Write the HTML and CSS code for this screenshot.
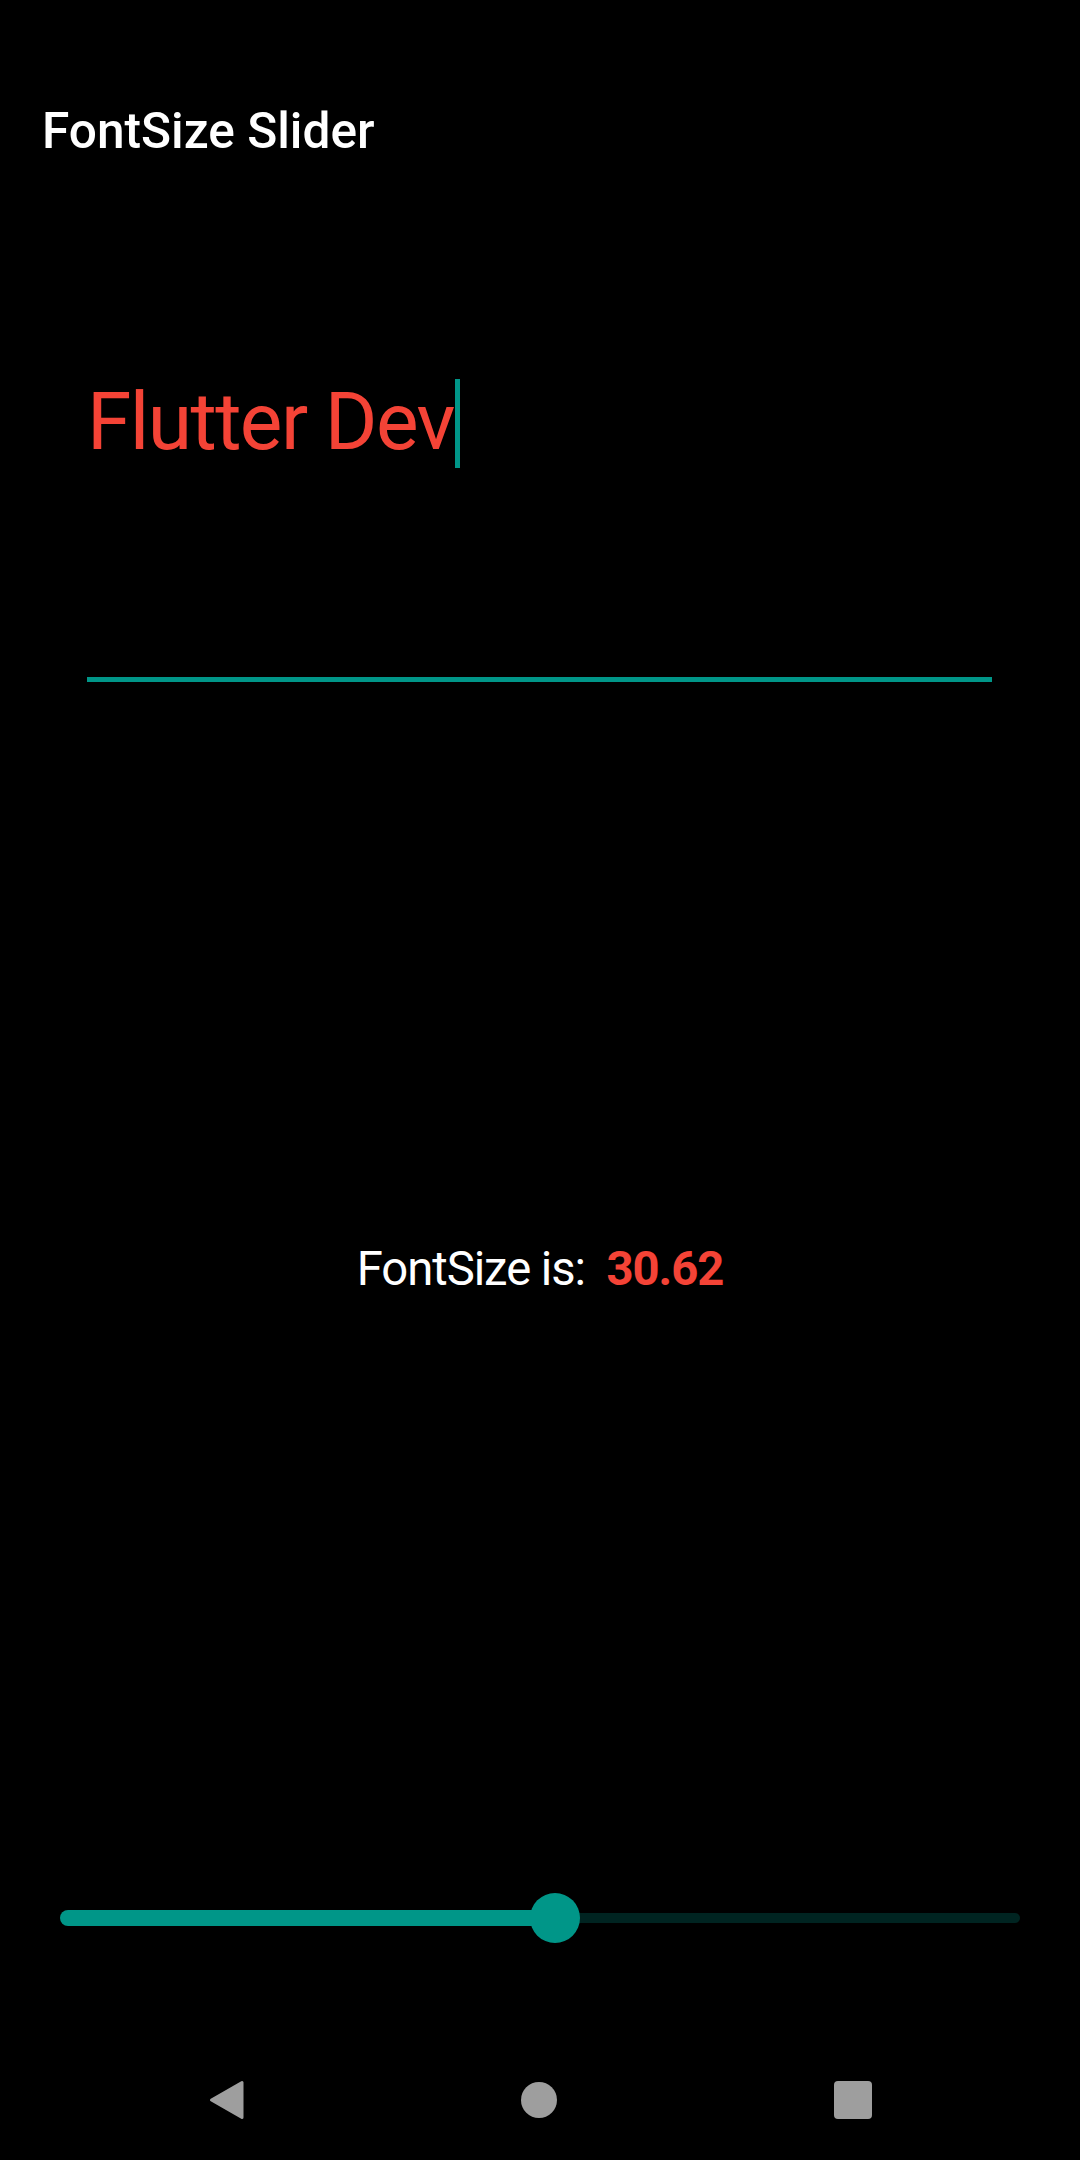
FILE: index.html
```html
<!DOCTYPE html>
<html lang="en">
<head>
<meta charset="utf-8">
<title>FontSize Slider</title>
<link rel="stylesheet" href="styles.css">
</head>
<body>
<div class="screen">
  <header class="appbar">
    <h1 class="appbar-title">FontSize Slider</h1>
  </header>
  <main class="content">
    <div class="field">
      <span class="field-text">Flutter Dev</span><span class="cursor"></span>
    </div>
    <p class="label">FontSize is:&nbsp; <strong class="value">30.62</strong></p>
    <div class="slider">
      <div class="track">
        <div class="track-active" style="width:495px"></div>
        <div class="track-inactive"></div>
        <div class="thumb" style="left:470px"></div>
      </div>
    </div>
  </main>
  <nav class="navbar">
    <span class="nav-btn nav-back">
      <svg width="35" height="40" viewBox="0 0 35 40"><path d="M2.5 20 L33 2.5 L33 37.5 Z" fill="#9e9e9e" stroke="#9e9e9e" stroke-width="3" stroke-linejoin="round"/></svg>
    </span>
    <span class="nav-btn nav-home"></span>
    <span class="nav-btn nav-recent"></span>
  </nav>
</div>
</body>
</html>
```
FILE: styles.css
```css
* { box-sizing: border-box; }
html, body {
  margin: 0;
  padding: 0;
  background: #000;
}
body {
  font-family: Roboto, "Noto Sans", "Liberation Sans", sans-serif;
  color: #fff;
}
.screen {
  width: 1080px;
  height: 2160px;
  display: flex;
  flex-direction: column;
  background: #000;
}
.appbar {
  height: 210px;
  padding: 102px 42px 0;
}
.appbar-title {
  margin: 0;
  font-size: 49.6px;
  line-height: 58px;
  font-weight: 500;
  color: #fff;
}
.content {
  flex: 1;
  display: flex;
  flex-direction: column;
}
.field {
  margin: 165px 88px 0 87px;
  padding-bottom: 208px;
  border-bottom: 5px solid #009688;
  font-size: 80.4px;
  line-height: 94px;
  letter-spacing: -0.02em;
  color: #f44336;
  white-space: nowrap;
}
.cursor {
  display: inline-block;
  width: 5px;
  height: 89px;
  margin-left: 1px;
  background: #009688;
  vertical-align: -19px;
}
.label {
  margin: 559px 0 0;
  text-align: center;
  font-size: 47.25px;
  line-height: 56px;
  letter-spacing: -0.022em;
  color: #fff;
}
.value {
  color: #f44336;
  font-weight: 700;
}
.slider {
  margin-top: 596px;
  padding: 0 60px;
}
.track {
  position: relative;
  height: 50px;
  display: flex;
  align-items: center;
}
.track-active {
  height: 16px;
  background: #009688;
  border-radius: 8px 0 0 8px;
}
.track-inactive {
  flex: 1;
  height: 10.5px;
  background: #002421;
  border-radius: 0 5.25px 5.25px 0;
}
.thumb {
  position: absolute;
  top: 0;
  width: 50px;
  height: 50px;
  border-radius: 50%;
  background: #009688;
}
.navbar {
  height: 120px;
  display: flex;
  align-items: center;
  justify-content: center;
  gap: 277px;
}
.nav-btn {
  display: block;
}
.nav-back {
  width: 35px;
  height: 40px;
}
.nav-back svg { display: block; }
.nav-home {
  width: 36px;
  height: 36px;
  border-radius: 50%;
  background: #9e9e9e;
}
.nav-recent {
  width: 38px;
  height: 38px;
  border-radius: 4px;
  background: #9e9e9e;
}
```
